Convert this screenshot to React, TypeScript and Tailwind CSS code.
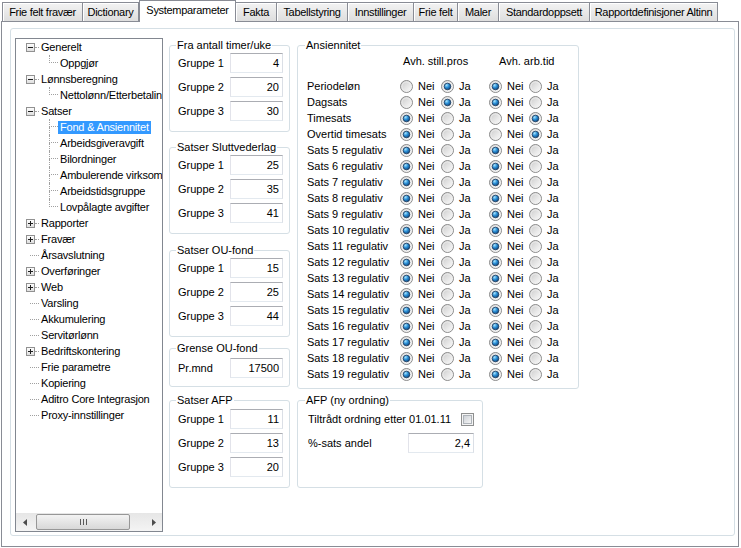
import React from 'react';

type TreeItem = { t: string; child?: boolean; exp?: '+' | '-'; last?: boolean; sel?: boolean };

const tabs = [
  { label: 'Frie felt fravær', w: 'w-[81px]' },
  { label: 'Dictionary', w: 'w-[57px]' },
  { label: 'Systemparameter', w: 'w-[97px]', active: true },
  { label: 'Fakta', w: 'w-[42px]' },
  { label: 'Tabellstyring', w: 'w-[72px]' },
  { label: 'Innstillinger', w: 'w-[67px]' },
  { label: 'Frie felt', w: 'w-[45px]' },
  { label: 'Maler', w: 'w-[42px]' },
  { label: 'Standardoppsett', w: 'w-[92px]' },
  { label: 'Rapportdefinisjoner Altinn', w: 'w-[129px]' },
];

const tree: TreeItem[] = [
  { t: 'Generelt', exp: '-' },
  { t: 'Oppgjør', child: true, last: true },
  { t: 'Lønnsberegning', exp: '-' },
  { t: 'Nettolønn/Etterbetaling', child: true, last: true },
  { t: 'Satser', exp: '-' },
  { t: 'Fond & Ansiennitet', child: true, sel: true },
  { t: 'Arbeidsgiveravgift', child: true },
  { t: 'Bilordninger', child: true },
  { t: 'Ambulerende virksomhet', child: true },
  { t: 'Arbeidstidsgruppe', child: true },
  { t: 'Lovpålagte avgifter', child: true, last: true },
  { t: 'Rapporter', exp: '+' },
  { t: 'Fravær', exp: '+' },
  { t: 'Årsavslutning' },
  { t: 'Overføringer', exp: '+' },
  { t: 'Web', exp: '+' },
  { t: 'Varsling' },
  { t: 'Akkumulering' },
  { t: 'Servitørlønn' },
  { t: 'Bedriftskontering', exp: '+' },
  { t: 'Frie parametre' },
  { t: 'Kopiering' },
  { t: 'Aditro Core Integrasjon' },
  { t: 'Proxy-innstillinger' },
];

type YN = 'n' | 'j';
const ansiennitet: [string, YN, YN][] = [
  ['Periodeløn', 'j', 'n'],
  ['Dagsats', 'j', 'n'],
  ['Timesats', 'n', 'j'],
  ['Overtid timesats', 'n', 'j'],
  ...Array.from({ length: 15 }, (_, i) => [`Sats ${i + 5} regulativ`, 'n', 'n'] as [string, YN, YN]),
];

const Expander = ({ plus }: { plus: boolean }) => (
  <svg width="9" height="9" viewBox="0 0 9 9" className="shrink-0">
    <defs>
      <linearGradient id="exg" x1="0" y1="0" x2="0" y2="1">
        <stop offset="0" stopColor="#ffffff" />
        <stop offset="1" stopColor="#dcdcdc" />
      </linearGradient>
    </defs>
    <rect x="0.5" y="0.5" width="8" height="8" fill="url(#exg)" stroke="#919191" />
    <path d="M2 4.5h5" stroke="#1e1e1e" />
    {plus && <path d="M4.5 2v5" stroke="#1e1e1e" />}
  </svg>
);

const Radio = ({ checked }: { checked: boolean }) => (
  <svg width="13" height="13" viewBox="0 0 13 13" className="shrink-0">
    <defs>
      <linearGradient id="rbg" x1="0" y1="0" x2="1" y2="1">
        <stop offset="0" stopColor="#c9c9c9" />
        <stop offset="1" stopColor="#ffffff" />
      </linearGradient>
      <radialGradient id="rdot" cx="0.35" cy="0.3" r="0.8">
        <stop offset="0" stopColor="#a8e6ff" />
        <stop offset="0.45" stopColor="#2b8fd6" />
        <stop offset="1" stopColor="#0a3a70" />
      </radialGradient>
    </defs>
    <circle cx="6.5" cy="6.5" r="6" fill="url(#rbg)" stroke="#8b8b8b" />
    <circle cx="6.5" cy="6.5" r="4.6" fill="none" stroke="#efefef" strokeWidth="0.8" />
    {checked && <circle cx="6.5" cy="6.5" r="3.3" fill="url(#rdot)" stroke="#1d3a5c" strokeWidth="0.8" />}
  </svg>
);

const Checkbox = () => (
  <svg width="13" height="13" viewBox="0 0 13 13" className="shrink-0">
    <defs>
      <linearGradient id="cbg" x1="0" y1="0" x2="1" y2="1">
        <stop offset="0" stopColor="#cbcfd5" />
        <stop offset="1" stopColor="#f7f7f7" />
      </linearGradient>
    </defs>
    <rect x="0.5" y="0.5" width="12" height="12" fill="#f4f4f4" stroke="#8e8f8f" />
    <rect x="2.5" y="2.5" width="8" height="8" fill="url(#cbg)" stroke="#aeb3b9" />
  </svg>
);

const Field = ({ value, w = 'w-[53px]' }: { value: string; w?: string }) => (
  <div className={`${w} h-[20px] border border-[#abadb3] border-l-[#e2e3ea] border-r-[#dbdfe6] border-b-[#e3e9ef] bg-white flex items-center justify-end pr-[3px] leading-[13px]`}>
    {value}
  </div>
);

const Row = ({ label, value }: { label: string; value: string }) => (
  <div className="flex items-center justify-between h-[20px]">
    <span className="leading-[13px] pt-[1px]">{label}</span>
    <Field value={value} />
  </div>
);

const Legend = ({ children }: { children: React.ReactNode }) => (
  <legend className="-ml-[2px] px-[1px] leading-[13px]">{children}</legend>
);

const TreeRow = ({ item }: { item: TreeItem }) => (
  <div className="flex items-center h-[16px] whitespace-nowrap">
    {item.child ? (
      <>
        <div className="w-[33px] shrink-0" />
        <div className="w-[9px] h-[16px] flex flex-col shrink-0">
          <div className="h-[8px] border-l border-b border-dotted border-[#a0a0a0]" />
          <div className={`h-[8px] ${item.last ? '' : 'border-l border-dotted border-[#a0a0a0]'}`} />
        </div>
      </>
    ) : item.exp ? (
      <>
        <div className="w-[10px] shrink-0" />
        <Expander plus={item.exp === '+'} />
        <div className="w-[4px] border-t border-dotted border-[#a0a0a0] shrink-0" />
      </>
    ) : (
      <>
        <div className="w-[14px] shrink-0" />
        <div className="w-[9px] border-t border-dotted border-[#a0a0a0] shrink-0" />
      </>
    )}
    <span
      className={`px-[2px] h-[13px] leading-[13px] tracking-[-0.2px] ${
        item.sel ? 'bg-[#3399ff] text-white' : ''
      }`}
    >
      {item.t}
    </span>
  </div>
);

const ScrollBar = () => (
  <div className="h-[18px] flex items-center bg-gradient-to-b from-[#e6e6e6] to-[#f4f4f4] shrink-0">
    <div className="w-[17px] h-full flex items-center justify-center">
      <svg width="4" height="7" viewBox="0 0 4 7"><path d="M4 0v7L0 3.5z" fill="#4d4d4d" /></svg>
    </div>
    <div className="ml-[3px] w-[94px] h-[16px] rounded-[2px] border border-[#979797] bg-gradient-to-b from-[#f3f3f3] to-[#d8d8d8] flex items-center justify-center">
      <svg width="7" height="6" viewBox="0 0 7 6">
        <path d="M0.5 0v6M3.5 0v6M6.5 0v6" stroke="#5a5a5a" />
      </svg>
    </div>
    <div className="flex-1" />
    <div className="w-[17px] h-full flex items-center justify-center">
      <svg width="4" height="7" viewBox="0 0 4 7"><path d="M0 0v7L4 3.5z" fill="#4d4d4d" /></svg>
    </div>
  </div>
);

const RadioItem = ({ checked, label, w }: { checked: boolean; label: string; w: string }) => (
  <div className={`flex items-center gap-[5px] ${w}`}>
    <Radio checked={checked} />
    <span className="leading-[13px]">{label}</span>
  </div>
);

export default function App() {
  return (
    <div className="w-[741px] h-[548px] bg-white overflow-hidden text-[11px] text-black font-['Liberation_Sans',Arial,sans-serif]">
      {/* tab strip */}
      <div className="h-[21px] flex items-end pl-[2px]">
        {tabs.map((tab, i) =>
          tab.active ? (
            <div
              key={tab.label}
              className={`${tab.w} relative z-10 h-[22px] -mb-px bg-white border border-b-0 border-[#898c95] flex items-center justify-center pb-[3px] tracking-[-0.3px] whitespace-nowrap`}
            >
              {tab.label}
            </div>
          ) : (
            <div
              key={tab.label}
              className={`${tab.w} ${i === 0 ? '' : '-ml-px'} h-[19px] border border-b-0 border-[#898c95] bg-gradient-to-b from-[#f3f3f3] to-[#dedede] shadow-[inset_1px_1px_0_#ffffff] flex items-center justify-center tracking-[-0.3px] whitespace-nowrap`}
            >
              {tab.label}
            </div>
          ),
        )}
      </div>

      {/* tab page */}
      <div className="ml-px w-[738px] h-[526px] border border-[#898c95] pt-[6px] pl-[8px] pr-[3px] pb-[10px]">
        <div className="h-full rounded-[3px] border border-[#d5dfe5] flex items-start pl-[4px] pt-[9px]">
          {/* tree */}
          <div className="w-[148px] h-[494px] border border-[#828790] bg-white flex flex-col overflow-hidden shrink-0">
            <div className="flex-1 overflow-hidden">
              {tree.map((item) => (
                <TreeRow key={item.t} item={item} />
              ))}
            </div>
            <ScrollBar />
          </div>

          {/* middle column */}
          <div className="ml-[6px] mt-px w-[121px] flex flex-col shrink-0">
            <fieldset className="h-[93px] border border-[#d5dfe5] rounded-[3px] pl-[8px] pr-[6px]">
              <Legend>Fra antall timer/uke</Legend>
              <div className="flex flex-col gap-[4px] pt-px">
                <Row label="Gruppe 1" value="4" />
                <Row label="Gruppe 2" value="20" />
                <Row label="Gruppe 3" value="30" />
              </div>
            </fieldset>
            <fieldset className="mt-[9px] h-[93px] border border-[#d5dfe5] rounded-[3px] pl-[8px] pr-[6px]">
              <Legend>Satser Sluttvederlag</Legend>
              <div className="flex flex-col gap-[4px] pt-px">
                <Row label="Gruppe 1" value="25" />
                <Row label="Gruppe 2" value="35" />
                <Row label="Gruppe 3" value="41" />
              </div>
            </fieldset>
            <fieldset className="mt-[10px] h-[93px] border border-[#d5dfe5] rounded-[3px] pl-[8px] pr-[6px]">
              <Legend>Satser OU-fond</Legend>
              <div className="flex flex-col gap-[4px] pt-px">
                <Row label="Gruppe 1" value="15" />
                <Row label="Gruppe 2" value="25" />
                <Row label="Gruppe 3" value="44" />
              </div>
            </fieldset>
            <fieldset className="mt-[5px] h-[45px] border border-[#d5dfe5] rounded-[3px] pl-[8px] pr-[6px]">
              <Legend>Grense OU-fond</Legend>
              <div className="pt-[3px]">
                <Row label="Pr.mnd" value="17500" />
              </div>
            </fieldset>
            <fieldset className="mt-[7px] h-[94px] border border-[#d5dfe5] rounded-[3px] pl-[8px] pr-[6px]">
              <Legend>Satser AFP</Legend>
              <div className="flex flex-col gap-[4px] pt-[2px]">
                <Row label="Gruppe 1" value="11" />
                <Row label="Gruppe 2" value="13" />
                <Row label="Gruppe 3" value="20" />
              </div>
            </fieldset>
          </div>

          {/* right column */}
          <div className="ml-[7px] mt-px flex flex-col shrink-0">
            <fieldset className="w-[282px] h-[350px] border border-[#d5dfe5] rounded-[3px] pl-[9px]">
              <Legend>Ansiennitet</Legend>
              <div className="mt-[3px] h-[13px] flex leading-[13px]">
                <div className="w-[93px]" />
                <div className="w-[89px] pl-[3px]">Avh. still.pros</div>
                <div className="pl-[10px]">Avh. arb.tid</div>
              </div>
              <div className="mt-[10px] flex flex-col">
                {ansiennitet.map(([label, a, b]) => (
                  <div key={label} className="h-[16px] flex items-center">
                    <div className="w-[93px] leading-[13px] whitespace-nowrap">{label}</div>
                    <RadioItem checked={a === 'n'} label="Nei" w="w-[41px]" />
                    <RadioItem checked={a === 'j'} label="Ja" w="w-[48px]" />
                    <RadioItem checked={b === 'n'} label="Nei" w="w-[40px]" />
                    <RadioItem checked={b === 'j'} label="Ja" w="" />
                  </div>
                ))}
              </div>
            </fieldset>
            <fieldset className="mt-[5px] w-[186px] h-[94px] border border-[#d5dfe5] rounded-[3px] pl-[10px] pr-[8px]">
              <legend className="-ml-[3px] px-[1px] leading-[13px]">AFP (ny ordning)</legend>
              <div className="mt-[4px] h-[16px] flex items-center justify-between">
                <span className="leading-[13px]">Tiltrådt ordning etter 01.01.11</span>
                <Checkbox />
              </div>
              <div className="mt-[6px] flex items-center justify-between">
                <span className="leading-[13px]">%-sats andel</span>
                <Field value="2,4" w="w-[66px]" />
              </div>
            </fieldset>
          </div>
        </div>
      </div>
    </div>
  );
}
